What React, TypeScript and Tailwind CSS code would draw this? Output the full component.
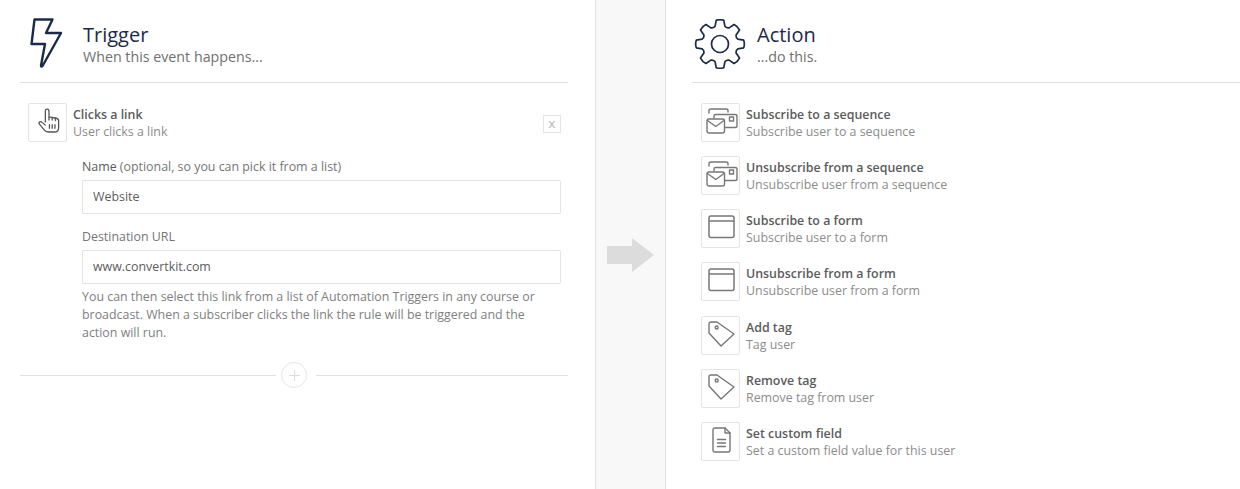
const Bolt = () => (
  <svg width="34" height="51" viewBox="0 0 34 51" fill="none" stroke="#1c2a4a" strokeWidth="2.4" strokeLinejoin="round" strokeLinecap="round">
    <path d="M4.5 1.5 H22.5 L16 15 H31 L12.5 48 Q11 49.5 11 47.5 L15 26 H1.5 Z" />
  </svg>
);

const Gear = () => {
  const teeth = 8;
  const cx = 26, cy = 25;
  const p = (r: number, t: number) => `${(cx + r * Math.cos(t)).toFixed(1)} ${(cy + r * Math.sin(t)).toFixed(1)}`;
  let d = "";
  for (let i = 0; i < teeth; i++) {
    const a = (i / teeth) * Math.PI * 2 - Math.PI / 2;
    const next = a + (Math.PI * 2) / teeth;
    d += `${i === 0 ? "M" : "L"}${p(24, a - 0.16)} Q${p(25, a)} ${p(24, a + 0.16)} L${p(18.5, a + 0.27)} Q${p(17, (a + next) / 2)} ${p(18.5, next - 0.27)} `;
  }
  return (
    <svg width="52" height="50" viewBox="0 0 52 50" fill="none" stroke="#1c2a4a" strokeWidth="1.7" strokeLinejoin="round">
      <path d={d + "Z"} />
      <circle cx={cx} cy={cy} r="8.5" />
    </svg>
  );
};

const Hand = () => (
  <svg width="22" height="26" viewBox="0 0 24 28" fill="none" stroke="#555" strokeWidth="1.4" strokeLinejoin="round" strokeLinecap="round">
    <path d="M8 15 V3.5 Q8 1 10 1 Q12 1 12 3.5 V9.5 L20 11 Q22.5 11.5 22.5 14 V21 Q22.5 26 18 26 H11 Q8.5 26 7 24 L1.5 17.5 Q0.5 15.8 2 15 Q3.2 14.3 4.5 15.5 L8 18.5" />
    <path d="M12 10 V13 M15.5 10.5 V13 M19 11 V13.5 M12.5 18 V22 M15.5 18 V22 M18.5 18 V22" />
  </svg>
);

const Sequence = () => (
  <svg width="32" height="26" viewBox="0 0 32 26" fill="none" stroke="#777" strokeWidth="1.4" strokeLinejoin="round" strokeLinecap="round">
    <path d="M3 5 V2.5 Q3 1 5 1 H20 Q22 1 22 2.5 V4" />
    <path d="M8 10 V8 Q8 6.5 9.5 6.5 H29 Q31 6.5 31 8 V18 Q31 19.5 29 19.5 H19" />
    <rect x="23.5" y="9" width="4" height="4" />
    <rect x="1" y="11" width="17.5" height="14" rx="2" />
    <path d="M1.5 12.5 L9.75 18.5 L18 12.5" />
  </svg>
);

const Form = () => (
  <svg width="27" height="24" viewBox="0 0 27 24" fill="none" stroke="#777" strokeWidth="1.5" strokeLinejoin="round">
    <rect x="1" y="1" width="25" height="21.5" rx="2" />
    <path d="M1 6 H26" />
  </svg>
);

const Tag = () => (
  <svg width="27" height="26" viewBox="0 0 27 26" fill="none" stroke="#777" strokeWidth="1.4" strokeLinejoin="round">
    <path d="M3 1 H9 L26 13 L13 25 L1 12 V3 Q1 1 3 1 Z" />
    <circle cx="8.7" cy="6.5" r="1.5" />
  </svg>
);

const Doc = () => (
  <svg width="19" height="26" viewBox="0 0 19 26" fill="none" stroke="#777" strokeWidth="1.4" strokeLinejoin="round" strokeLinecap="round">
    <path d="M3 1 H13 L18 6 V23 Q18 25 16 25 H3 Q1 25 1 23 V3 Q1 1 3 1 Z" />
    <path d="M13 1 V6 H18 M5.5 12.5 H13.5 M5.5 16 H13.5 M5.5 19.5 H13.5" />
  </svg>
);

const IconBox = ({ children }: { children: React.ReactNode }) => (
  <div className="w-[39px] h-[39px] self-start shrink-0 flex items-center justify-center pb-[3px] pl-[2px] border border-[#e4e4e4] rounded-[2px] bg-white">
    {children}
  </div>
);

const Row = ({ icon, title, sub }: { icon: React.ReactNode; title: string; sub: string }) => (
  <div className="flex items-center h-[40px] gap-[6px]">
    <IconBox>{icon}</IconBox>
    <div className="text-[12.4px] leading-[17px]">
      <div className="font-semibold text-[#5c5c5c]">{title}</div>
      <div className="text-[#8c8c8c]">{sub}</div>
    </div>
  </div>
);

const actions = [
  { icon: <Sequence />, title: "Subscribe to a sequence", sub: "Subscribe user to a sequence" },
  { icon: <Sequence />, title: "Unsubscribe from a sequence", sub: "Unsubscribe user from a sequence" },
  { icon: <Form />, title: "Subscribe to a form", sub: "Subscribe user to a form" },
  { icon: <Form />, title: "Unsubscribe from a form", sub: "Unsubscribe user from a form" },
  { icon: <Tag />, title: "Add tag", sub: "Tag user" },
  { icon: <Tag />, title: "Remove tag", sub: "Remove tag from user" },
  { icon: <Doc />, title: "Set custom field", sub: "Set a custom field value for this user" },
];

const Header = ({ icon, title, sub, gap }: { icon: React.ReactNode; title: string; sub: string; gap: string }) => (
  <div className={`h-[83px] border-b border-[#e2e2e2] flex items-start ${gap}`}>
    {icon}
    <div className="pt-[20px]">
      <div className="text-[20px] leading-[29px] text-[#1c2a4a]">{title}</div>
      <div className="text-[14.25px] leading-[15px] text-[#6f6f6f]">{sub}</div>
    </div>
  </div>
);

const Field = ({ label, value }: { label: React.ReactNode; value: string }) => (
  <div>
    <div className="text-[12.4px] leading-[18px] text-[#757575] mb-[4px]">{label}</div>
    <div className="h-[33.5px] border border-[#e4e4e4] rounded-[2px] bg-white flex items-center pl-[10px] pt-[1px] text-[12.4px] text-[#5c5c5c]">
      {value}
    </div>
  </div>
);

export default function App() {
  return (
    <div className="w-[1240px] h-[489px] flex bg-white overflow-hidden font-['Open_Sans',sans-serif]">
      <section className="w-[595px] shrink-0 pl-[20px] pr-[27px]">
        <Header
          gap="gap-[19px]"
          icon={<div className="pl-[10px] pt-[18px]"><Bolt /></div>}
          title="Trigger"
          sub="When this event happens..."
        />
        <div className="pt-[20px]">
          <div className="flex items-center justify-between pl-[8px] pr-[7px]">
            <Row icon={<Hand />} title="Clicks a link" sub="User clicks a link" />
            <div className="w-[18px] h-[18px] mt-[2px] border border-[#e4e4e4] flex items-center justify-center font-['Liberation_Mono',monospace] text-[13px] leading-none text-[#b5b5b5]">
              x
            </div>
          </div>
          <div className="ml-[62px] mr-[7px] mt-[15px] flex flex-col gap-[14.5px]">
            <Field
              label={<><span className="text-[#5c5c5c]">Name</span> (optional, so you can pick it from a list)</>}
              value="Website"
            />
            <Field label="Destination URL" value="www.convertkit.com" />
          </div>
          <p className="ml-[62px] mr-[26px] mt-[4.5px] text-[12.4px] leading-[18px] text-[#808080]">
            You can then select this link from a list of Automation Triggers in any course or broadcast. When a subscriber clicks the link the rule will be triggered and the action will run.
          </p>
          <div className="flex items-center mt-[20px]">
            <div className="w-[256px] h-px bg-[#e2e2e2]" />
            <div className="w-[26px] h-[26px] ml-[5px] mr-[9px] rounded-full border border-[#e6e6e6] flex items-center justify-center">
              <svg width="11" height="11" viewBox="0 0 11 11" stroke="#dcdcdc" strokeWidth="1"><path d="M5.5 0V11M0 5.5H11" /></svg>
            </div>
            <div className="flex-1 h-px bg-[#e2e2e2]" />
          </div>
        </div>
      </section>

      <div className="w-[71px] shrink-0 bg-[#f8f8f8] border-x border-[#e2e2e2] flex justify-center pt-[238px]">
        <svg width="47" height="34" viewBox="0 0 47 34" className="block h-[34px]"><path d="M0 8 H25 V0 L47 17 L25 34 V26 H0 Z" fill="#dcdcdc" /></svg>
      </div>

      <section className="flex-1 pl-[26px]">
        <Header
          gap="gap-[11px]"
          icon={<div className="pl-[2px] pt-[19px]"><Gear /></div>}
          title="Action"
          sub="...do this."
        />
        <div className="pt-[20px] pl-[9px] flex flex-col gap-[13.15px]">
          {actions.map((a) => (
            <Row key={a.title} icon={a.icon} title={a.title} sub={a.sub} />
          ))}
        </div>
      </section>
    </div>
  );
}
